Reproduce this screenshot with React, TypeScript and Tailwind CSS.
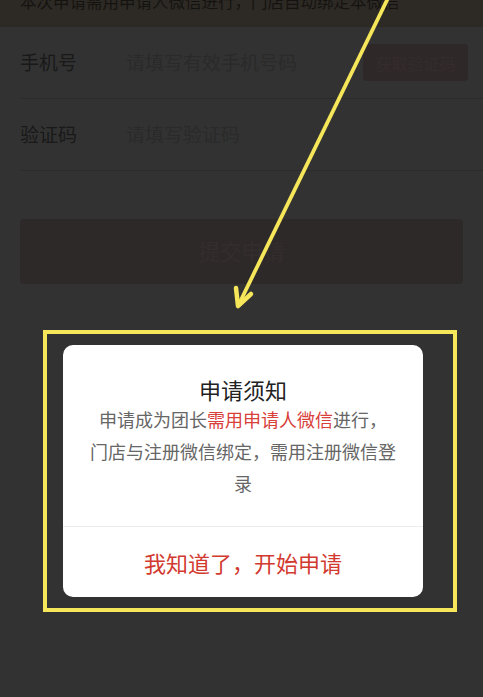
import React from 'react';

const cjk = { fontFamily: '"Noto Sans CJK SC", "Noto Sans", sans-serif' };

function FormRow({ label, placeholder, action }: { label: string; placeholder: string; action?: React.ReactNode }) {
  return (
    <div className="flex items-center h-[72px] ml-5 border-b border-[#2b2b2b] pr-4">
      <span className="w-[106px] text-[19px] text-[#191919]">{label}</span>
      <span className="flex-1 text-[19px] text-[#2a2a2a]">{placeholder}</span>
      {action}
    </div>
  );
}

export default function App() {
  return (
    <div className="relative w-[483px] h-[697px] overflow-hidden bg-[#323232]" style={cjk}>
      {/* page under the mask */}
      <div className="h-[27px] bg-[#2d2a25] overflow-hidden">
        <p className="px-5 -mt-[11px] text-[16.5px] leading-[24px] text-[#151310] whitespace-nowrap">本次申请需用申请人微信进行，门店自动绑定本微信</p>
      </div>
      <FormRow
        label="手机号"
        placeholder="请填写有效手机号码"
        action={
          <div className="w-[105px] h-[37px] -mr-[1px] flex items-center justify-center bg-[#2e2828] rounded-sm text-[16px] text-[#352c2c]">获取验证码</div>
        }
      />
      <FormRow label="验证码" placeholder="请填写验证码" />
      <div className="mx-5 mt-[48px] h-[65px] rounded bg-[#2e2929] flex items-center justify-center text-[21.5px] text-[#342d2d]">提交申请</div>

      {/* dialog */}
      <div className="absolute left-[63px] top-[345px] w-[360px] h-[252px] bg-white rounded-[10px] flex flex-col">
        <div className="px-[22px] pt-[30px] pb-[27px] text-center">
          <h2 className="text-[22px] leading-[28px] text-[#222]">申请须知</h2>
          <p className="text-[18px] leading-[32px] text-[#666]">
            申请成为团长<span className="text-[#d8403a]">需用申请人微信</span>进行，
            <br />
            门店与注册微信绑定，需用注册微信登录
          </p>
        </div>
        <div className="flex-1 border-t border-[#ececec] flex items-center justify-center text-[22px] text-[#d23a30]">我知道了，开始申请</div>
      </div>

      {/* annotation */}
      <div className="absolute left-[43px] top-[330px] w-[414px] h-[282px] border-4 border-[#f5e65a]" />
      <svg className="absolute left-0 top-0" width="483" height="330" viewBox="0 0 483 330">
        <line x1="389" y1="-4" x2="240" y2="302" stroke="#f5e65a" strokeWidth="3.8" />
        <path d="M238 306 L236 288 M238 306 L251 294" stroke="#f5e65a" strokeWidth="4.5" strokeLinecap="round" fill="none" />
      </svg>
    </div>
  );
}
